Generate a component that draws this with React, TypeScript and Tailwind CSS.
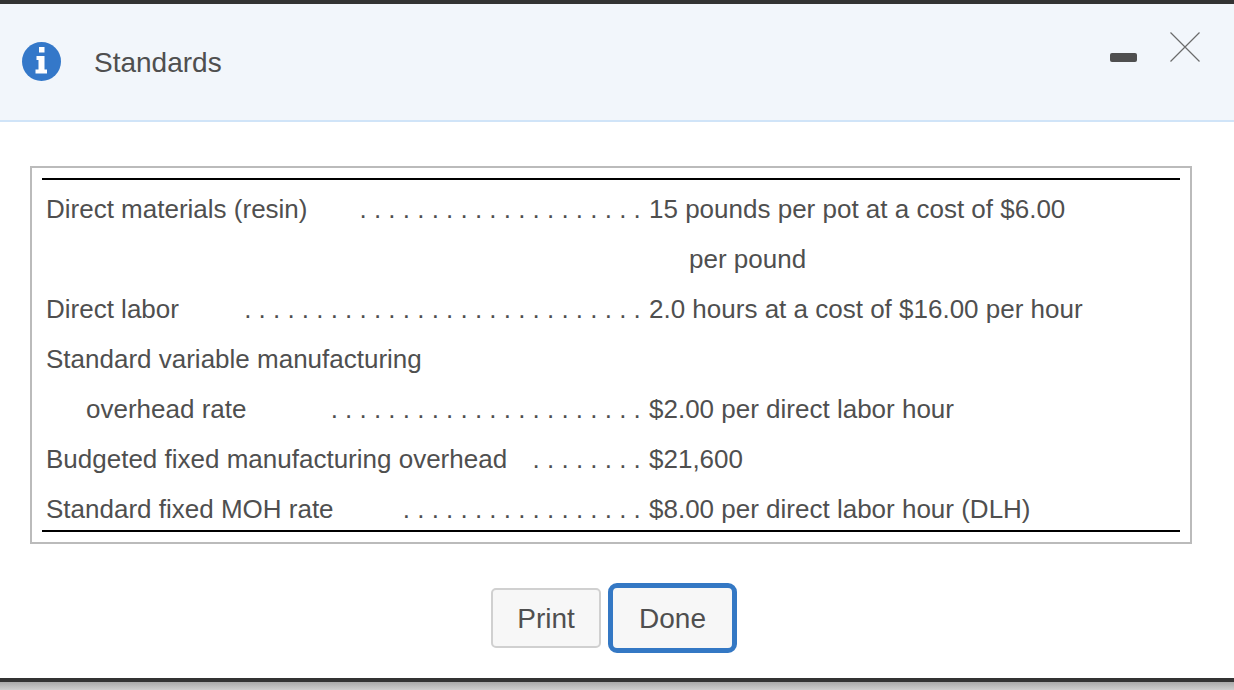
const rows: { left: string; indent?: boolean; dots: number; right?: string; rightIndent?: boolean }[] = [
  { left: "Direct materials (resin)", dots: 20, right: "15 pounds per pot at a cost of $6.00" },
  { left: "", dots: 0, right: "per pound", rightIndent: true },
  { left: "Direct labor", dots: 28, right: "2.0 hours at a cost of $16.00 per hour" },
  { left: "Standard variable manufacturing", dots: 0 },
  { left: "overhead rate", indent: true, dots: 22, right: "$2.00 per direct labor hour" },
  { left: "Budgeted fixed manufacturing overhead", dots: 8, right: "$21,600" },
  { left: "Standard fixed MOH rate", dots: 17, right: "$8.00 per direct labor hour (DLH)" },
];

export default function App() {
  return (
    <div className="w-[1234px] h-[690px] overflow-hidden bg-white flex flex-col text-[#4f4f4f] font-['Liberation_Sans',Arial,sans-serif]">
      <div className="h-[4px] bg-[#333333] shrink-0" />
      <header className="h-[118px] shrink-0 bg-[#f2f6fb] border-b-2 border-[#d0e4f8] flex items-center pl-[22px] pr-[34px]">
        <svg width="39" height="39" viewBox="0 0 39 39" className="shrink-0 mt-[-2px]">
          <circle cx="19.5" cy="19.5" r="19.5" fill="#3478c9" />
          <rect x="17" y="5" width="5.5" height="5.5" fill="#fff" />
          <path d="M14.5 14h8v13.5h2.5v4h-11.5v-4h3v-9.5h-2z" fill="#fff" />
        </svg>
        <span className="ml-[33px] mt-[2px] text-[28px] leading-none text-[#4f4f4f]">Standards</span>
        <div className="ml-auto flex items-center">
          <div className="w-[27px] h-[9px] rounded-[2px] bg-[#4f4f4f] mt-[-9px]" />
          <svg width="30" height="30" viewBox="0 0 30 30" className="ml-[33px] mt-[-31px]">
            <path d="M0.5 0.5 L29.5 29.5 M29.5 0.5 L0.5 29.5" stroke="#6b6b6b" strokeWidth="1.2" fill="none" />
          </svg>
        </div>
      </header>

      <main className="flex-1 flex flex-col">
        <section className="mt-[44px] ml-[30px] mr-[42px] h-[378px] border-2 border-[#bbbbbb] pt-[10px] px-[10px]">
          <div className="h-[354px] border-t-2 border-b-2 border-black pt-[4px] text-[26px] leading-[50px]">
            {rows.map((r, i) => (
              <div key={i} className={`flex ${i === 6 ? "h-[46px]" : "h-[50px]"} pl-[4px]`}>
                <div className="w-[603px] shrink-0 flex whitespace-nowrap">
                  <span className={r.indent ? "pl-[40px]" : ""}>{r.left}</span>
                  {r.dots > 0 && (
                    <span className="ml-auto pr-[1px] tracking-[7.2px]">{".".repeat(r.dots)}</span>
                  )}
                </div>
                {r.right && (
                  <span className={`whitespace-nowrap ${r.rightIndent ? "pl-[40px]" : ""}`}>{r.right}</span>
                )}
              </div>
            ))}
          </div>
        </section>

        <div className="flex justify-center gap-[7px] items-center mt-[39px] pr-[6px]">
          <button className="w-[110px] h-[60px] pt-[1px] rounded-[5px] border-2 border-[#d0d0d0] bg-[#f7f7f7] text-[28px] text-[#4f4f4f]">
            Print
          </button>
          <button className="w-[129px] h-[70px] pt-[1px] rounded-[9px] border-[5px] border-[#3478c4] bg-[#f7f7f7] text-[28px] text-[#4f4f4f]">
            Done
          </button>
        </div>
      </main>

      <div className="h-[4px] bg-[#333333] shrink-0" />
      <div className="h-[8px] shrink-0 bg-gradient-to-b from-[#a9a9a9] to-[#cfcfcf]" />
    </div>
  );
}
